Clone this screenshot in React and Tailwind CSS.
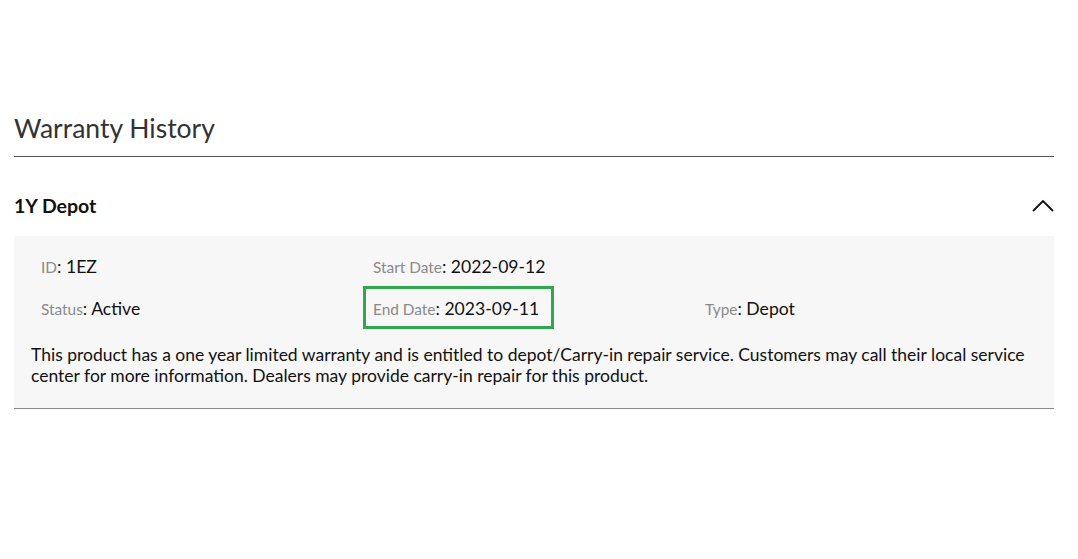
import React, { useState } from "react";

const Field = ({ label, value }) => (
  <span className="whitespace-nowrap">
    <span className="text-[15.4px] text-[#8a8a8a]">{label}</span>
    <span className="text-[17.6px] text-[#111]">: {value}</span>
  </span>
);

export default function App() {
  const [open, setOpen] = useState(true);

  return (
    <div className="min-h-[559px] w-full bg-white pl-[14px] pr-[24px] pt-[110px] font-['Lato',sans-serif] text-[#111]">
      {/* Section title */}
      <h2 className="border-b border-[#555] pb-[10px] text-[26.5px] leading-[36px] text-[#333]">
        Warranty History
      </h2>

      {/* Accordion header */}
      <button
        className="flex w-full items-center justify-between pt-[37px] pb-[18px] text-left"
        onClick={() => setOpen(!open)}
      >
        <span className="text-[19.5px] font-bold leading-[24px]">1Y Depot</span>
        <svg
          width="24"
          height="24"
          viewBox="0 0 24 24"
          fill="none"
          stroke="#111"
          strokeWidth="1.8"
          className={open ? "mr-[-1px]" : "mr-[-1px] rotate-180"}
        >
          <path d="M2 17 L12 7 L22 17" />
        </svg>
      </button>

      {/* Accordion body */}
      {open && (
        <div className="border-b border-[#8a8a8a] bg-[#f7f7f7] px-[17px] pt-[11px] pb-[22px]">
          <div className="grid grid-cols-[332px_332px_332px] grid-rows-[41px_41px] items-center">
            <div className="pl-[10px]">
              <Field label="ID" value="1EZ" />
            </div>
            <div className="pl-[10px]">
              <Field label="Start Date" value="2022-09-12" />
            </div>
            <div />
            <div className="pl-[10px] pt-[2px]">
              <Field label="Status" value="Active" />
            </div>
            <div>
              <div className="-mt-[2px] inline-flex h-[43px] w-[191px] items-center border-[3px] border-[#2ea84a] pl-[7px] pt-[3px]">
                <Field label="End Date" value="2023-09-11" />
              </div>
            </div>
            <div className="pl-[10px] pt-[2px]">
              <Field label="Type" value="Depot" />
            </div>
          </div>
          <p className="mt-[15px] text-[17.5px] leading-[21px] text-[#111]">
            This product has a one year limited warranty and is entitled to depot/Carry-in repair service. Customers may
            call their local service center for more information. Dealers may provide carry-in repair for this product.
          </p>
        </div>
      )}
    </div>
  );
}
